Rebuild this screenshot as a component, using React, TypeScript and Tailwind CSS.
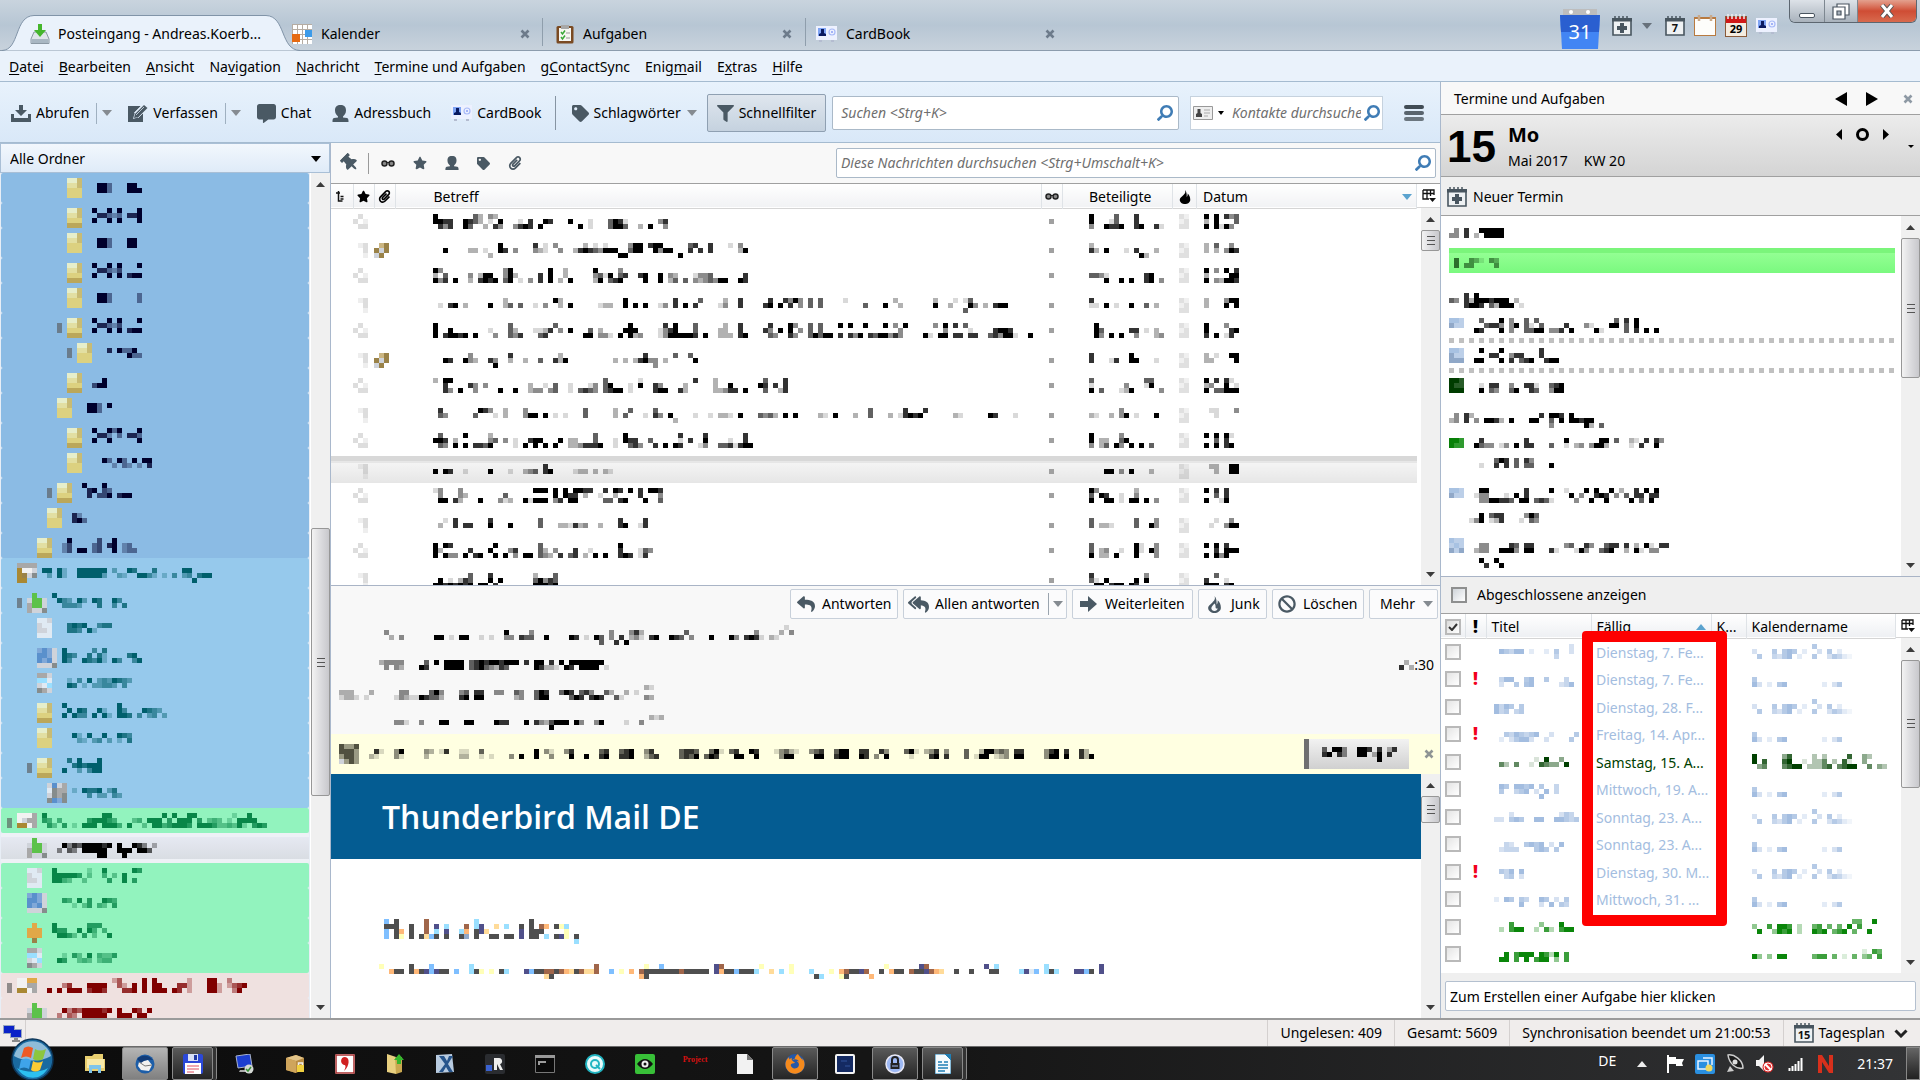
import type { ReactNode } from "react";
import {
  FaBan,
  FaCommentAlt,
  FaFilter,
  FaFirefoxBrowser,
  FaPaperclip,
  FaReply,
  FaReplyAll,
  FaSearch,
  FaStar,
  FaTag,
  FaThumbtack,
} from "react-icons/fa";
import clsx from "clsx";

const CELL = 5;
const INK: Record<string, number> = { "1": 0.15, "2": 0.3, "3": 0.45, "4": 0.62, "5": 0.8, "6": 1 };
const PALETTE: Record<string, string> = {
  a: "#e6eecb", b: "#c8bb74", c: "#e2dfa2", d: "#dcd180", e: "#bba75a",
  f: "#f2f2f2", g: "#a8a8a8", h: "#a98833", i: "#5cc24a", j: "#cfd3da",
  k: "#e0eaf3", l: "#5a90cc", m: "#80a8d8", n: "#e0a848", o: "#9a8248",
  p: "#a8c2e2", q: "#bccfe8", r: "#90a8c8", s: "#4f4f4f", t: "#7fbfff",
  u: "#ffdb99", v: "#9adfff", w: "#a0664a", x: "#50508a", y: "#ffffb8",
  z: "#ffb878", A: "#003c00", B: "#285c28", C: "#088008", D: "#2f9a2f",
  E: "#505040", F: "#9a9a84", G: "#868c8c", H: "#cbb682",
};

// Rows are split by "|", every run is "column:cells"
function Mosaic({ data, color = "#000", className }: { data: string; color?: string; className?: string }) {
  const cells: { x: number; y: number; ch: string }[] = [];
  const rows = data.split("|");
  let width = 1;
  rows.forEach((row, y) => {
    row.split(" ").filter(Boolean).forEach((run) => {
      const [start, chars] = run.split(":");
      chars.split("").forEach((ch, i) => {
        const x = Number(start) + i;
        if (ch !== ".") cells.push({ x, y, ch });
        width = Math.max(width, x + 1);
      });
    });
  });
  return (
    <svg
      width={width * CELL}
      height={rows.length * CELL}
      shapeRendering="crispEdges"
      className={clsx("block shrink-0", className)}
      aria-hidden="true"
    >
      {cells.map((c, i) => (
        <rect
          key={i}
          x={c.x * CELL}
          y={c.y * CELL}
          width={CELL}
          height={CELL}
          fill={PALETTE[c.ch] ?? color}
          opacity={INK[c.ch] ?? 1}
        />
      ))}
    </svg>
  );
}

function Caret({ className = "text-[#858b91]" }: { className?: string }) {
  return (
    <svg width="10" height="6" viewBox="0 0 10 6" className={clsx("shrink-0", className)} aria-hidden="true">
      <path d="M0 0h10L5 6z" fill="currentColor" />
    </svg>
  );
}

function CloseX({ label, className = "text-[#6d7b8b]" }: { label: string; className?: string }) {
  return (
    <button type="button" aria-label={label} className={clsx("shrink-0", className)}>
      <svg width="10" height="10" viewBox="0 0 10 10">
        <path d="M1.5 1.5l7 7M8.500 1.500l-7 7" stroke="currentColor" strokeWidth="2.600" />
      </svg>
    </button>
  );
}

function Scrollbar({ start, size, rest, className }: { start: number; size: number; rest: number; className?: string }) {
  return (
    <div className={clsx("flex w-[19px] shrink-0 flex-col bg-[#f0f0f0]", className)} aria-hidden="true">
      <div className="flex h-[22px] items-center justify-center">
        <svg width="9" height="5"><path d="M0 5h9L4.500 0z" fill="#3c3c3c" /></svg>
      </div>
      <div style={{ flexGrow: start }} />
      <div
        style={{ flexGrow: size }}
        className="flex basis-0 flex-col items-center justify-center gap-[3px] rounded-xs border border-[#979797] bg-linear-to-r from-[#f3f3f3] via-[#dcdcdf] to-[#c8c8cc]"
      >
        <span className="h-px w-2 bg-[#555]" />
        <span className="h-px w-2 bg-[#555]" />
        <span className="h-px w-2 bg-[#555]" />
      </div>
      <div style={{ flexGrow: rest }} />
      <div className="flex h-[22px] items-center justify-center">
        <svg width="9" height="5"><path d="M0 0h9L4.500 5z" fill="#3c3c3c" /></svg>
      </div>
    </div>
  );
}

/* ---------- Icons ---------- */

function InboxIcon() {
  return (
    <svg width="20" height="20" viewBox="0 0 20 20">
      <path d="M4 8h12l3 7v4.500H1V15z" fill="#dfe5ea" stroke="#8b98a3" />
      <path d="M1.500 15h17v4h-17z" fill="#a9b7c2" />
      <path d="M8 0h4v6h4l-6 7-6-7h4z" fill="#44b62c" />
    </svg>
  );
}

function CalendarGridIcon() {
  return (
    <svg width="20" height="20" viewBox="0 0 20 20">
      <path d="M0 0h20v20H0z" fill="#b5aca2" />
      {[0, 5, 10, 15].map((y) => [0, 5, 10, 15].map((x) => <path key={`${x}-${y}`} d={`M${x + 1} ${y + 1}h4v4h-4z`} fill="#fff" />))}
      <path d="M0 10h8v8H0z" fill="#e66a12" />
      <path d="M13 6h7v7h-7z" fill="#3d9be9" />
    </svg>
  );
}

function TasksIcon() {
  return (
    <svg width="18" height="20" viewBox="0 0 18 20">
      <rect x="0.500" y="2" width="17" height="17.500" rx="1.500" fill="#7a4a22" />
      <path d="M3 4h12v13H3z" fill="#f6f6f2" />
      <path d="M5 1h8v4H5z" fill="#a8a8a8" />
      <path d="M5 8l1.500 2L9 6.500M5 13l1.500 2L9 11.500" stroke="#38a838" strokeWidth="1.500" fill="none" />
      <path d="M10 9h4M10 14h4" stroke="#999" />
    </svg>
  );
}

function CardIcon({ className }: { className?: string }) {
  return (
    <svg width="21" height="16" viewBox="0 0 21 16" className={className}>
      <path d="M0 0h21v14H0z" fill="#edf1ff" />
      <path d="M2 2h8v8H2z" fill="#7fa4f4" />
      <path d="M3 10V8l2-1V3h3v4l2 1v2z" fill="#0a1a60" />
      <circle cx="16" cy="6" r="3" fill="none" stroke="#a8baf8" strokeWidth="1.200" />
      <circle cx="16" cy="6" r="1" fill="#8a9ef4" />
      <path d="M3 14h3v2H3zM15 14h3v2h-3z" fill="#b4bcd0" />
    </svg>
  );
}

function DownloadIcon() {
  return (
    <svg width="20" height="17" viewBox="0 0 20 17" fill="#4a5964">
      <path d="M8 0h4v5h4l-6 6-6-6h4z" />
      <path d="M0 9h3v4h14V9h3v8H0z" />
    </svg>
  );
}

function WriteIcon() {
  return (
    <svg width="20" height="18" viewBox="0 0 20 18">
      <path d="M0 2h13l-6 6-2 7 6-2 4-4v9H0z" fill="#4a5964" />
      <path d="M6 14l1-4L16 1l3.500 3-9 9z" fill="#4a5964" />
      <path d="M8 11l8-8M6 9l7-7M10 14l7-7" stroke="#d5e2ee" strokeWidth=".8" />
    </svg>
  );
}

function PersonIcon({ size = 17 }: { size?: number }) {
  return (
    <svg width={size} height={size} viewBox="0 0 17 17" fill="#4a5964">
      <path d="M8.500 0C13 0 14 2.500 14 5.500S12.500 10 11 11.500V12.500l4 .5c1.500.5 1.500 2 1.500 4H.5c0-2 0-3.500 1.500-4l4-.5v-1C4.500 10 3 8.500 3 5.500S4 0 8.500 0z" />
    </svg>
  );
}

function ForwardIcon() {
  return (
    <svg width="17" height="16" viewBox="0 0 17 16">
      <path d="M0 5h8V0l9 8-9 8v-5H0z" fill="#4a5964" />
    </svg>
  );
}

function CalIcon({ text, plus }: { text?: string; plus?: boolean }) {
  return (
    <svg width="20" height="20" viewBox="0 0 20 20" className="shrink-0">
      <path d="M1 3.500h18V19H1z" fill="#eef1f3" stroke="#48555f" strokeWidth="1.600" />
      <path d="M0 2h20v3.500H0z" fill="#48555f" />
      <path d="M3 0v4M7 0v4M11 0v4M15 0v4" stroke="#48555f" strokeWidth="1.500" />
      {plus && <path d="M8 7h4v3h3v4h-3v3H8v-3H5v-4h3z" fill="#48555f" />}
      {text && <text x="10" y="16" fontSize="11" fontWeight="700" textAnchor="middle" fill="#111">{text}</text>}
    </svg>
  );
}

function Glasses() {
  return (
    <svg width="14" height="7" viewBox="0 0 14 7">
      <circle cx="3.500" cy="3.500" r="2.500" fill="#888" stroke="#222" strokeWidth="1.500" />
      <circle cx="10.500" cy="3.500" r="2.500" fill="#888" stroke="#222" strokeWidth="1.500" />
      <path d="M6 2.500h2" stroke="#222" />
    </svg>
  );
}

function Flame({ color = "#000", size = 14, hollow }: { color?: string; size?: number; hollow?: boolean }) {
  return (
    <svg width={size} height={size} viewBox="0 0 14 16">
      <path d="M7 0c1 3 0 4-2 6s-4 3-4 5c0 3 3 5 6 5s6-2 6-5c0-3-1-5-3-7 0 2 0 3-1 4 0-3 0-6-2-8z" fill={color} />
      {hollow && <path d="M7 7c-1 1-3 3-3 4.500S5.500 14 7 14s3-1 3-2.500c-1 .5-2 0-2-1 0-1.500 0-2.500-1-3.500z" fill="#f7f8fa" />}
    </svg>
  );
}

function ColumnPicker() {
  return (
    <svg width="14" height="14" viewBox="0 0 14 14">
      <path d="M1 1h11v5M1 1v9h6M1 4.500h11M5 1v9M8.500 1v6" stroke="#111" strokeWidth="1.300" fill="none" />
      <path d="M7 9h7l-3.500 4z" fill="#111" />
    </svg>
  );
}

function SearchGlyph() {
  return <FaSearch size={16} className="shrink-0 -scale-x-100 text-[#3f7cb5]" aria-hidden="true" />;
}

/* ---------- Title and tabs ---------- */

function TabBar() {
  return (
    <header className="flex h-[51px] shrink-0 items-end justify-between border-b border-[#8c9cad] bg-linear-to-b from-[#c9d4de] via-[#b7c6d4] to-[#c8d2dc]">
      <div className="flex items-end self-stretch pt-4" role="tablist">
        <div role="tab" aria-selected="true" className="relative h-[35px] w-[292px]">
          <svg className="absolute inset-0 h-[36px] w-[304px]" viewBox="0 0 304 36">
            <path d="M2 35.500C20 35 14 1 34 .5H266C286 1 280 35 300 35.500" fill="#eaf2fb" stroke="#8194a8" />
          </svg>
          <div className="relative flex h-full items-center gap-2 pt-[2px] pl-[30px]">
            <InboxIcon />
            <span>Posteingang - Andreas.Koerb...</span>
          </div>
        </div>
        <div role="tab" className="flex h-[35px] w-[250px] items-center gap-[9px] pt-[2px] pr-[12px]">
          <CalendarGridIcon />
          <span className="grow">Kalender</span>
          <CloseX label="Kalender schließen" />
        </div>
        <div className="mb-1 h-7 w-px bg-[#8f9eac]" />
        <div role="tab" className="flex h-[35px] w-[262px] items-center gap-[9px] pt-[2px] pr-[13px] pl-[13px]">
          <TasksIcon />
          <span className="grow">Aufgaben</span>
          <CloseX label="Aufgaben schließen" />
        </div>
        <div className="mb-1 h-7 w-px bg-[#8f9eac]" />
        <div role="tab" className="flex h-[35px] w-[262px] items-center gap-[9px] pt-[2px] pr-[13px] pl-[10px]">
          <CardIcon />
          <span className="grow">CardBook</span>
          <CloseX label="CardBook schließen" />
        </div>
      </div>

      <div className="flex items-start self-stretch pr-[3px]">
        <div className="flex h-full items-center gap-[9px] pt-[2px] pr-[12px]">
          <svg width="40" height="40" viewBox="0 0 40 40" className="mt-[5px]">
            <path d="M3 0h34v8H3z" fill="#bdbdbd" />
            <circle cx="11" cy="3" r="2" fill="#fff" />
            <circle cx="28" cy="3" r="2" fill="#fff" />
            <path d="M0 6h40l-2 34H2z" fill="#4285f4" />
            <path d="M0 6h40l-1 17H1z" fill="#2a5fd0" />
            <text x="20" y="30" fontSize="20" textAnchor="middle" fill="#fff">31</text>
          </svg>
          <div className="flex items-center gap-[10px] pr-[4px] pl-[3px]">
            <CalIcon plus />
            <Caret className="text-[#67717b]" />
          </div>
          <CalIcon text="7" />
          <svg width="22" height="22" viewBox="0 0 22 22">
            <path d="M0 2h22v19H0z" fill="#b87a40" />
            <path d="M1 4h20v16H1z" fill="#fdfdfb" />
            <path d="M5 0v6M17 0v6" stroke="#c9a98a" strokeWidth="2.500" />
          </svg>
          <svg width="22" height="24" viewBox="0 0 22 24" className="shrink-0">
            <path d="M0 2h22v21H0z" fill="#8a5a38" />
            <path d="M1 8h20v14H1z" fill="#f4ece0" />
            <path d="M1 3h20v6H1z" fill="#d01818" />
            <path d="M3 0v5M7 0v5M11 0v5M15 0v5M19 0v5" stroke="#eee" strokeWidth="1.500" />
            <text x="11" y="19" fontSize="11" fontWeight="700" textAnchor="middle">29</text>
          </svg>
          <CardIcon />
        </div>
        <div className="flex h-[23px] overflow-hidden rounded-b-md border border-t-0 border-[#5c6670]">
          <button type="button" aria-label="Minimieren" className="flex w-[35px] items-end justify-center border-r border-[#7d8790] bg-linear-to-b from-[#dde2e8] to-[#a9b2bc] pb-1">
            <span className="h-[5px] w-4 rounded-xs border border-[#4a5560] bg-white" />
          </button>
          <button type="button" aria-label="Verkleinern" className="flex w-[33px] items-center justify-center border-r border-[#7d8790] bg-linear-to-b from-[#dde2e8] to-[#a9b2bc]">
            <svg width="18" height="17" viewBox="0 0 18 17" fill="#fff" stroke="#4a5560" strokeWidth="1.200">
              <path d="M5 1h12v11H5z" />
              <path d="M1 4h12v12H1z" />
              <path d="M5 8h4v4H5z" fill="#a9b2bc" />
            </svg>
          </button>
          <button type="button" aria-label="Schließen" className="flex w-[58px] items-center justify-center bg-linear-to-b from-[#e3a08e] via-[#cf4c34] to-[#d8694d]">
            <svg width="16" height="14" viewBox="0 0 16 14">
              <path d="M3 1l10 12M13 1L3 13" stroke="#555" strokeWidth="5" />
              <path d="M3 1l10 12M13 1L3 13" stroke="#fff" strokeWidth="3" />
            </svg>
          </button>
        </div>
      </div>
    </header>
  );
}

const MENUS: [string, string, string][] = [
  ["", "D", "atei"], ["", "B", "earbeiten"], ["", "A", "nsicht"], ["Na", "v", "igation"],
  ["", "N", "achricht"], ["", "T", "ermine und Aufgaben"], ["g", "C", "ontactSync"],
  ["Enig", "m", "ail"], ["E", "x", "tras"], ["", "H", "ilfe"],
];

function MenuBar() {
  return (
    <nav className="flex h-[31px] shrink-0 items-center gap-[15px] border-b border-[#a5bbd0] bg-[#eaf2fb] pt-[2px] pl-[9px]">
      {MENUS.map(([pre, key, post]) => (
        <button type="button" key={pre + key + post}>
          {pre}<u className="underline-offset-2">{key}</u>{post}
        </button>
      ))}
    </nav>
  );
}

function ToolButton({ icon, children, className }: { icon: ReactNode; children: ReactNode; className?: string }) {
  return (
    <button type="button" className={clsx("flex shrink-0 items-center gap-[5px] text-[#000]", className)}>
      <span className="text-[#4a5964]">{icon}</span>
      {children}
    </button>
  );
}

function Toolbar() {
  return (
    <div className="flex h-[61px] shrink-0 items-center border-b border-[#a5bbd0] bg-linear-to-b from-[#e8f2fc] to-[#d9e8f8] pt-[2px] pl-[11px]">
      <ToolButton icon={<DownloadIcon />}>Abrufen</ToolButton>
      <span className="ml-[7px] h-[21px] w-px bg-[#9fb0c0]" />
      <button type="button" aria-label="Abrufen Optionen" className="ml-[5px]"><Caret /></button>
      <ToolButton icon={<WriteIcon />} className="ml-4">Verfassen</ToolButton>
      <span className="ml-[7px] h-[21px] w-px bg-[#9fb0c0]" />
      <button type="button" aria-label="Verfassen Optionen" className="ml-[5px]"><Caret /></button>
      <ToolButton icon={<FaCommentAlt size={19} />} className="ml-4">Chat</ToolButton>
      <ToolButton icon={<PersonIcon />} className="ml-[21px]">Adressbuch</ToolButton>
      <ToolButton icon={<CardIcon />} className="ml-[20px]">CardBook</ToolButton>
      <span className="ml-[13px] h-[34px] w-px bg-[#8694a2]" />
      <ToolButton icon={<FaTag size={17} />} className="ml-[16px]">Schlagwörter</ToolButton>
      <Caret className="ml-[6px] text-[#858b91]" />
      <ToolButton
        icon={<FaFilter size={17} />}
        className="ml-[10px] h-[38px] rounded-xs border border-[#8fa0b2] bg-linear-to-b from-[#dfe6ee] to-[#c5d2df] px-[9px]"
      >
        Schnellfilter
      </ToolButton>
      <label className="ml-[6px] flex h-[34px] min-w-0 grow items-center rounded-xs border border-[#aab9c8] bg-white pr-[5px] pl-2">
        <input aria-label="Suchen" placeholder="Suchen <Strg+K>" className="min-w-0 grow italic outline-none placeholder:text-[#6f6f6f]" />
        <SearchGlyph />
      </label>
      <label className="ml-[11px] flex h-[34px] w-[193px] shrink-0 items-center gap-[3px] border border-[#c6d2de] bg-white px-[2px]">
        <svg width="20" height="15" viewBox="0 0 20 15" className="shrink-0">
          <path d="M.5.5h19v13H.5z" fill="#eee" stroke="#999" />
          <path d="M3 11V8l1.500-1V3h3v4L9 8v3z" fill="#444" />
          <path d="M11 4h6M11 7h6M11 10h4" stroke="#aaa" />
        </svg>
        <svg width="6" height="4" className="ml-[2px] shrink-0"><path d="M0 0h6L3 4z" /></svg>
        <input aria-label="Kontakte durchsuchen" placeholder="Kontakte durchsuchen" className="ml-[5px] min-w-0 grow italic outline-none placeholder:text-[#6f6f6f]" />
        <SearchGlyph />
      </label>
      <button type="button" aria-label="Menü" className="mr-4 ml-[21px] flex shrink-0 flex-col gap-[2px]">
        <span className="h-1 w-5 rounded-xs bg-[#414c55]" />
        <span className="h-1 w-5 rounded-xs bg-[#59646d]" />
        <span className="h-1 w-5 rounded-xs bg-[#6b767f]" />
      </button>
    </div>
  );
}

/* ---------- Folder tree ---------- */

const ICONS: Record<string, string> = {
  folder: "0:aab|0:ccb|0:ddd|0:ddd",
  dark: "0:aab|0:ccb|0:ddd|0:eee",
  account: "0:gggg|0:hffj|0:hojG|0:hh",
  mailbox: "0:fffg|0:fjgg|0:hhfg",
  server: "0:ffnn|0:ffgg|0:hhfg",
  inbox: "0:.i|0:jiij|0:giij|0:gjjG",
  sheet: "0:kkj|0:jkk|0:jjk|0:kkk",
  sent: "0:mlmj|0:llmj|0:lmlj|0:jjjG",
  feed: "0:jljg|0:kGgg|0:jGgG|0:GlmG",
  trash: "0:ggj|0:vvk|0:jkv|0:Ggj",
  junk: "0:.n|0:nnn|0:nnn|0:.o",
};
const WIDE_ICONS = ["account", "mailbox", "server", "inbox", "sent", "feed"];

interface Folder {
  icon: string;
  indent: number;
  label: string;
  open?: boolean;
  tone?: "blue" | "sky" | "green" | "selected" | "rose";
}

const FOLDERS: Folder[] = [
  { icon: "folder", indent: 13, label: "|1:663 7:66|1:663 7:666" },
  { icon: "dark", indent: 13, label: "0:6 3:6.6 9:6|1:55323.556|0:6 3:6.6 9:6" },
  { icon: "folder", indent: 13, label: "|1:663 7:66|1:663 7:66" },
  { icon: "dark", indent: 13, label: "0:6 3:6.6 9:6|1:55324|0:6 3:6.6 7:566" },
  { icon: "folder", indent: 13, label: "|1:663 9:3|1:663 9:3" },
  { icon: "dark", indent: 13, label: "0:6 3:6.6 9:6|1:55324|0:6 3:6.6 7:566", open: true },
  { icon: "folder", indent: 15, label: "|1:5.6336|5:633", open: true },
  { icon: "dark", indent: 13, label: "|2:6|0:466" },
  { icon: "folder", indent: 11, label: "|1:663.6|1:663" },
  { icon: "dark", indent: 13, label: "0:6 3:636 9:6|1:552.3.553|0:6 3:6 9:6" },
  { icon: "folder", indent: 13, label: "|2:63.63.6.66|4:2.32.2.5" },
  { icon: "dark", indent: 11, label: "0:6 4:6|1:56.43|1:5.446.566", open: true },
  { icon: "folder", indent: 9, label: "|0:52|0:563" },
  { icon: "dark", indent: 7, label: "1:6 7:4 10:6|0:24 6:34.56.23|0:24.66.34..6.233" },
  { icon: "account", indent: 3, tone: "sky", label: "|0:66.62..666666.3..65...5.....66|1:3.62..666663..32..6642.2.4.34.566|30:6" },
  { icon: "inbox", indent: 5, tone: "sky", label: "0:6|1:643.63.65..64|2:4443...5..4.5", open: true },
  { icon: "sheet", indent: 7, tone: "sky", label: "|1:5656..455|1:554.62" },
  { icon: "sent", indent: 7, tone: "sky", label: "0:6 6:4.5|0:654..5.52....56|0:64..65462.64..46" },
  { icon: "trash", indent: 7, tone: "sky", label: "|1:2.4.6.3436543|1:65.2.33443.4" },
  { icon: "dark", indent: 7, tone: "sky", label: "0:6 11:6|1:6.65..62..64...6543|0:6.644.6.62.665.4.34.3" },
  { icon: "folder", indent: 7, tone: "sky", label: "|2:62.6..6..654|3:32.34.3.2.5" },
  { icon: "dark", indent: 7, tone: "sky", label: "1:5.6...6|2:565666|0:6..3.466", open: true },
  { icon: "feed", indent: 9, tone: "sky", label: "|0:2.6556.35|3:4.33.43" },
  { icon: "mailbox", indent: 3, tone: "green", label: "0:6 12:66 24:6.6..66 38:2..6|0:54.4.....566654...34.666.5.666.5.343.2.6666|1:53.5.2.666.6664.6..3.66456665.6665334362.565", open: true },
  { icon: "inbox", indent: 5, tone: "selected", label: "|2:6354666656.6..653.2|1:3.43.66666..666.664|9:66...6" },
  { icon: "sheet", indent: 5, tone: "green", label: "0:6 7:2..6.....65|0:666665.3..4.3.6|0:6643..3....5..6.5" },
  { icon: "sent", indent: 5, tone: "green", label: "|2:54.6.5..654|4:2.35.43.5" },
  { icon: "junk", indent: 5, tone: "green", label: "0:6......555|0:655..6.64.4|1:6653.5.3..6" },
  { icon: "trash", indent: 5, tone: "green", label: "|2:2.53.6.4335|1:65..343.344" },
  { icon: "server", indent: 3, tone: "rose", label: "14:2 15:4 20:6 22:6 29:2 33:66 37:3|4:35 9:6666 15:42 18:6 20:6 22:66 27:55 29:2 33:66 35:2 37:2456|1:6 3:6 5:666 9:56 11:65 16:556 20:6 22:666 26:65 29:2 33:66 35:2 38:3 39:6", open: true },
  { icon: "inbox", indent: 5, tone: "rose", label: "|2:6354666656.6..65.6|1:3.43.66666..666.66" },
];

const TONES = {
  blue: { row: "bg-[#8bbbe4]", ink: "#00002c" },
  sky: { row: "bg-[#96c9ec]", ink: "#005f6c" },
  green: { row: "bg-[#92f3be]", ink: "#088648" },
  selected: { row: "border-y-4 border-[#eef1f6] bg-linear-to-b from-[#e6e9f2] to-[#d9dde3]", ink: "#000" },
  rose: { row: "bg-[#efe1e0]", ink: "#800000" },
};

function FolderPane() {
  return (
    <aside className="flex w-[331px] shrink-0 flex-col border-r border-[#a9b8cc]">
      <label className="flex h-[30px] shrink-0 items-center border border-[#a9bfd6] bg-linear-to-b from-[#f2f7fd] to-[#dfebf8] pt-[2px] pr-2 pl-[9px]">
        <select aria-label="Ordneransicht" className="grow appearance-none outline-none">
          <option>Alle Ordner</option>
        </select>
        <Caret className="text-black" />
      </label>
      <div className="flex min-h-0 grow">
        <ul className="min-w-0 grow overflow-hidden bg-[#e8eef6] pr-px pl-px">
          {FOLDERS.map((f, i) => {
            const tone = TONES[f.tone ?? "blue"];
            return (
              <li
                key={i}
                style={{ paddingLeft: 1 + (f.indent - 2) * CELL }}
                className={clsx(
                  "flex items-start gap-[5px] rounded-xs odd:h-[30px] even:h-[25px]",
                  tone.row,
                  f.tone === "selected" ? "pt-px" : "pt-[5px]",
                )}
              >
                <Mosaic data={f.open ? "|0:4|0:4" : "0:."} color="#555" />
                <Mosaic data={ICONS[f.icon]} />
                <Mosaic data={f.label} color={tone.ink} className={WIDE_ICONS.includes(f.icon) ? "" : "ml-[5px]"} />
              </li>
            );
          })}
        </ul>
        <Scrollbar start={335} size={267} rest={201} className="ml-px" />
      </div>
    </aside>
  );
}

/* ---------- Message list ---------- */

interface Message {
  subject: string;
  from: string;
  date: string;
  clip?: boolean;
  selected?: boolean;
}

const MESSAGES: Message[] = [
  {
    subject: "0:6 8:42 11:32|0:6655..6542.1.6 17:1 19:5 22:65 27:6 31:1 35:4651 45:35|1:535 6:64 10:2.53 16:35 18:65 21:6 29:6 31:1 35:4664 41:2.6 46:3",
    from: "0:6 5:4 9:5|0:6 4:14 9:5|0:3 3:6556 9:56 13:51",
    date: "0:6.6.534|0:2.6...4|0:6.6163",
  },
  {
    subject: "13:6 20:5.1 24:3 30:2.1.1 39:366.5 44:66 51:45 55:5 59:1.3|2:6 7:22.1 13:65.3 20:321 25:3 28:256543666 39:466 44:6366 51:5.5 55:5 61:26|11:2 37:66 49:6",
    from: "0:2|0:52.6 7:1.5 13:2|10:62",
    date: "0:2.4..3|0:2.2.365",
    clip: true,
  },
  {
    subject: "0:63 14:36 23:6 26:2 32:6 37:3|0:2.4 7:3.2 10:66 14:362 21:5.6 26:2 32:3416 37:45 41:56 45:6.32 52:1334 62:5|0:635.6 7:2.5656 14:46.1.3 21:5.6.2.6 32:26.456 42:6 45:6.24 50:4.3234366 61:65",
    from: "|0:4431 11:56|3:6 6:6.6 11:56 14:3",
    date: "0:6.3.6.5|0:2....66|0:6.32665",
  },
  {
    subject: "14:2 24:62 38:6 48:5 53:4 58:2 61:5 67:5..5363.4.4 82:1 92:2 100:2 104:1 106:14|1:1.56.2 11:6 14:24.4 20:1.3 25:2.6 33:122 38:6.6.6 45:13 48:5.6.5 57:13 61:5 66:56.6 71:5.3.4.4 86:4 90:6 93:2 100:6 103:2 107:63 110:2.566|106:4",
    from: "0:5|0:11.6.1 8:6 11:4.2",
    date: "0:2...366|0:2...6.6",
  },
  {
    subject: "0:6 15:4 24:4 39:6 46:5 48:6 52:4 58:2 61:5 67:5 71:63 75:4.4 81:6.6..6 90:6.3.6 100:3.6.5 106:4|0:6 3:6 11:1 15:42 20:1125.3 27:6 31:4.2 38:666 45:1356 52:4 57:22 61:5 66:53.6 71:6.3 75:4.4 93:3 102:3 107:1 112:5665|0:6.56656.6 12:3 15:435 21:45 30:66 33:331.6 39:623 45:1366666 52:5.6 57:222 61:56 67:43 71:53 75:46466 81:5.536.5446 89:66353 98:61.66.55.4 107:35 111:453661 119:6",
    from: "1:6|1:64 8:55.1.2|1:63.6.6..3...23",
    date: "0:6...3|0:6....56|0:5.6.15",
  },
  {
    subject: "7:3 15:5 25:2 42:5 48:4 51:4|2:65..632 11:53 15:2 18:2 21:4 24:526 36:2.2 40:25633 46:2 52:6|12:6 44:3",
    from: "0:5 8:6|0:5 4:15 8:66 13:1",
    date: "0:2.1..66|0:22....6",
    clip: true,
  },
  {
    subject: "0:2.66 34:4 41:1 52:5 56:2 66:4 70:5|2:5 7:53.3 19:2 22:1.4 27:1 31:13 34:46 39:1.6 44:53 50:2 56:2 59:6 65:65.5 70:5|2:53.6 8:3 13:6 16:6 19:233.34 27:1 29:4543 34:4566 39:1 44:566 49:52 56:22355.6 66:4 69:25",
    from: "0:4 11:44|0:1 7:3 11:16|0:6.4 6:126 14:3",
    date: "0:6.5.51|0:23..6.1|0:6.44666",
  },
  {
    subject: "1:5 9:653 14:2 18:3 30:4 36:2 39:4 44:4 87:4 94:5 98:5|1:43 8:4 12:1.2 18:366.6 24:1.1 30:4 36:2.4 42:1.53.6 52:1 55:1.221.6 65:4342.6 72:6 77:21.6 84:2 87:4 91:2.15656 104:21 111:65 116:1|48:2",
    from: "6:3|0:21 4:2.36.1 13:6",
    date: "1:11...3|2:1",
  },
  {
    subject: "1:4 6:6 11:2 32:4 38:6 49:5 54:5 62:5|0:665.2 11:34.3 16:1 19:566 25:6 27:22 32:4 36:1 38:655 43:4 49:1.5 54:6 59:1 62:5|1:43.6.6.5546 16:1 18:6.6.6.6 27:2235556 36:1 39:453 44:5.6.65 53:13 57:4451 61:566",
    from: "0:6 6:3|0:6 2:22 6:46|0:3.24.63.6.6.4",
    date: "0:6.6.61|2:4.5|0:6.6.56",
  },
  {
    subject: "22:5|0:6.65 6:1 11:6 15:1 18:234 22:56 28:122 32:2 34:21",
    from: "|3:66.3.6 12:2",
    date: "1:22..66|2:2..66",
    selected: true,
  },
  {
    subject: "0:13 5:3 20:666 24:6.6.66 30:55 34:5.65.6.5 43:665|1:3 5:32 14:4 24:6.6 27:55 30:2 33:1 36:2 41:5 45:3|1:66 4:52 9:6 13:312 18:61666 24:35.66 34:44 37:56 42:6 45:4",
    from: "0:63 9:2|0:4.65 6:1 9:3|0:6..66.1.66.6.3",
    date: "0:6.5.5|2:4.5|0:6..16",
  },
  {
    subject: "2:1.5 11:5 21:4 37:5 42:5|1:2..5.55 11:6 15:6 21:4 25:221523 33:2 37:56 41:15",
    from: "0:4 9:4 13:3|0:4.221 9:4 12:63",
    date: "2:1..3|1:1..366",
  },
  {
    subject: "0:6.65 12:6 21:4 37:6|0:62 7:5 11:6 15:35 21:42.3 28:5 31:1 37:5 41:143|0:6.633.6.56 12:6 14:6.3 18:66 21:432 25:5.45 30:2.6.6 37:565 41:15",
    from: "0:4 9:61 13:3|0:4.23 6:1 9:61 12:63|0:6 2:22.6 9:6 13:3",
    date: "0:6.6.5|2:5.666|0:6.636",
  },
  {
    subject: "7:4 11:5 20:2 24:4|1:6.1.254 11:6.6 20:46 22:354|0:66565656.66.5 20:66656",
    from: "0:5 11:3|0:41.6 9:6.6|1:66.566.65",
    date: "2:4|0:5...1|0:666.56",
  },
];

const thCell = "border-r border-[#dfe3e7] pt-[2px] text-left font-normal";

function MessageList() {
  return (
    <div className="flex h-[402px] shrink-0 overflow-hidden border-b border-[#a9b4c6] bg-white">
      <div className="min-w-0 grow overflow-hidden">
        <table className="w-full table-fixed border-collapse">
          <colgroup>
            <col className="w-[22px]" />
            <col className="w-[21px]" />
            <col className="w-[21px]" />
            <col />
            <col className="w-[21px]" />
            <col className="w-[110px]" />
            <col className="w-[24px]" />
            <col className="w-[220px]" />
          </colgroup>
          <thead>
            <tr className="h-6 border-b border-[#d5d5d5] bg-linear-to-b from-white to-[#f1f2f4]">
              <th aria-label="Thema" className={thCell}>
                <svg width="9" height="12" className="ml-[5px]"><path d="M0 2h4M2.500 0v4M2.500 4v6h4M4.500 5.500h3M4.500 8h3" stroke="#111" strokeWidth="1.500" fill="none" /></svg>
              </th>
              <th aria-label="Stern" className={thCell}><FaStar size={13} className="ml-[3px]" /></th>
              <th aria-label="Anhang" className={thCell}><FaPaperclip size={13} className="ml-[3px]" /></th>
              <th className={clsx(thCell, "pl-[38px]")}>Betreff</th>
              <th aria-label="Gelesen" className={thCell}><span className="flex justify-center"><Glasses /></span></th>
              <th className={clsx(thCell, "pl-[26px]")}>Beteiligte</th>
              <th aria-label="Junk" className={thCell}><span className="flex justify-center"><Flame /></span></th>
              <th className={clsx(thCell, "pl-[6px]")}>
                <span className="flex items-center justify-between pr-1">Datum<Caret className="text-[#5ba3cf]" /></span>
              </th>
            </tr>
          </thead>
          <tbody>
            {MESSAGES.map((m, i) => (
              <tr
                key={i}
                className={clsx(
                  "align-top odd:h-[30px] even:h-[25px]",
                  m.selected && "border-t-[5px] border-[#d8d8d8] bg-linear-to-b from-[#f4f4f4] to-[#e6e6e6]",
                )}
              >
                <td />
                <td className={m.selected ? "pt-[3px]" : "pt-[5px]"}>
                  <Mosaic data={i % 2 ? "1:12|2:2|2:1" : "1:2|0:2.1|1:22"} color="#8d8d8d" />
                </td>
                <td className={m.selected ? "pt-[3px]" : "pt-[5px]"}>{m.clip && <Mosaic data="1:Ho|0:ojo|0:jo" />}</td>
                <td className={clsx("overflow-hidden pl-[38px]", m.selected ? "pt-[3px]" : "pt-[5px]")}><Mosaic data={m.subject} /></td>
                <td className={clsx("pl-[7px]", m.selected ? "pt-[3px]" : "pt-[5px]")}><Mosaic data="|0:6" color="#a0a0a0" /></td>
                <td className={clsx("overflow-hidden pl-[26px]", m.selected ? "pt-[3px]" : "pt-[5px]")}><Mosaic data={m.from} /></td>
                <td className={clsx("pl-[6px]", m.selected ? "pt-[3px]" : "pt-[5px]")}><Mosaic data="0:21|0:12|0:22" color="#999" /></td>
                <td className={clsx("pl-[7px]", m.selected ? "pt-[3px]" : "pt-[5px]")}><Mosaic data={m.date} /></td>
              </tr>
            ))}
          </tbody>
        </table>
      </div>
      <div className="flex w-[23px] shrink-0 flex-col items-end">
        <button type="button" aria-label="Spalten wählen" className="flex h-6 w-full shrink-0 items-center justify-center border-b border-[#d5d5d5]"><ColumnPicker /></button>
        <Scrollbar start={0} size={19} rest={312} className="grow" />
      </div>
    </div>
  );
}

/* ---------- Message pane ---------- */

const actionButton = "flex h-[30px] items-center rounded-xs border border-[#c8d0da] bg-[#fbfbfc] text-black";

function MessagePane() {
  return (
    <article className="flex min-h-0 grow flex-col bg-[#f8f8f8]">
      <div className="flex justify-end gap-[5px] pt-[3px] pr-[2px]">
        <button type="button" className={clsx(actionButton, "w-[108px] gap-[7px] pl-[6px]")}><FaReply size={18} className="text-[#4a5964]" />Antworten</button>
        <div className={clsx(actionButton, "w-[164px]")}>
          <button type="button" className="flex grow items-center gap-[6px] pl-1"><FaReplyAll size={21} className="text-[#4a5964]" />Allen antworten</button>
          <button type="button" aria-label="Weitere Antwortarten" className="flex h-[22px] w-[18px] items-center justify-center border-l border-[#9aa4ae]"><Caret /></button>
        </div>
        <button type="button" className={clsx(actionButton, "w-[121px] gap-[8px] pl-[7px]")}><ForwardIcon />Weiterleiten</button>
        <button type="button" className={clsx(actionButton, "w-[69px] gap-[8px] pl-[7px]")}><Flame size={17} color="#4a5964" hollow />Junk</button>
        <button type="button" className={clsx(actionButton, "w-[92px] gap-[7px] pl-[5px]")}><FaBan size={18} className="text-[#4a5964]" />Löschen</button>
        <button type="button" className={clsx(actionButton, "w-[69px] justify-between pr-[4px] pl-[10px]")}>Mehr<Caret /></button>
      </div>
      <div className="flex h-[115px] shrink-0 flex-col gap-[10px] overflow-hidden pt-[6px] pl-2">
        <Mosaic data="89:1|9:3 33:6 38:3 54:3 58:352 69:4 83:3 88:2.3|10:2.3 19:66.1.66..1.1..33.544 41:6 46:65.1.64.3.5.231.56..654.3...6...63.5651.21|52:4..5.6" />
        <div className="flex h-5 items-start">
          <Mosaic data="|8:23333 17:4.6 21:6666.4565665666.5 39:66.5.6..6 46:66646 49:6666|9:3.32 16:65.. 21:6666.45643254.. 39:65221.65.66 49:666.1" />
          <span className="mr-[6px] ml-auto flex items-start"><Mosaic data="|1:2|0:5.2" />:30</span>
        </div>
        <Mosaic data="61:21|0:222 6:2 12:33 18:463 24:34.55..33..43..465..465.453..42..2.1|0:1221.1 11:13211 16:6544 20:2 24:56.66 35:23 39:466 46:465.565 55:41 61:32|" />
        <Mosaic data="62:212|11:331 16:3 20:66 25:66 31:655 37:6.5323 42:3666.63 51:36 57:1 60:3|42:6" />
      </div>
      <div className="flex h-10 shrink-0 items-center bg-[#ffffe1] pr-[6px] pl-2">
        <Mosaic data="0:EFFE|0:EEEF|0:FEEF|0:jFEF" />
        <Mosaic
          className="ml-[10px]"
          data="1:51 5:36 11:32 14:15 18:11 22:4 33:6 35:31 39:35 46:45 50:456 55:35 62:4554 68:461 72:45 76:65 81:13421 88:345 93:466 98:55 102:53 107:461 111:235 115:3 119:4 122:266 125:343 129:55 135:356 139:5 142:52|0:21 5:31 11:2 18:22 22:1.1 28:3.6 33:6 36:3 40:6 43:6 46:56 50:556 55:245 62:4546 67:465 73:66 77:6 82:366 89:66 93:566 98:65 101:3.4 103:6 108:1 112:56 115:5 119:4 121:166 125:123 129:66 135:366 139:6 142:526"
        />
        <button type="button" aria-label="Einstellungen" className="ml-auto flex h-[30px] w-[105px] items-center justify-center border-l-[5px] border-[#6f6f70] bg-linear-to-b from-[#f2f2f2] to-[#d0d0d0]">
          <Mosaic data="0:4.663..665.5.25|0:56.53..66.26.5|11:6" />
        </button>
        <span className="ml-[15px] flex"><CloseX label="Hinweis schließen" className="text-[#8e9494]" /></span>
      </div>
      <div className="flex min-h-0 grow bg-white">
        <div className="min-w-0 grow overflow-hidden">
          <h1 className="flex h-[85px] items-center bg-[#045c92] pl-[51px] font-['Open_Sans','Noto_Sans',sans-serif] text-[32px] font-semibold text-white">
            Thunderbird Mail DE
          </h1>
          <Mosaic
            className="mt-[60px] ml-[53px]"
            data="0:t.s 8:w 18:v 29:s|0:sss..s..w.x.v 16:w.vx..u.v..s.s.wz.syv|0:t.sz.s..w.v.x..vz.sxu 27:x.sss....y|0:t.sy.s.suts.s..sr.s..ss.ss.x.ss.v.sxy 38:s|38:v"
          />
          <Mosaic
            className="mt-[20px] ml-12"
            data="0:y 6:s 10:t 18:v 43:w 53:y 56:t 67:xw 76:y 82:y 101:y 108:xw 121:x.v 133:v 144:x|2:zss.szsxtxss.t..vsy.y.sv 29:xtsswwswzuswuuw 46:t.y.z.wssssssswsssss 67:xzsstsssv 78:u.v.y 86:v 90:y.zwssxw 100:s.zss 106:wssxwzu 115:s..s...ss 128:vxkt 133:vsv 139:xxts.x|33:us 52:zs 87:sv 92:ys 98:z"
          />
        </div>
        <Scrollbar start={0} size={26} rest={179} />
      </div>
    </article>
  );
}

function FilterBar() {
  return (
    <div className="flex h-[41px] shrink-0 items-center border-b border-[#a0a0a0] bg-[#f8f8f8] pr-1 pl-[10px] text-[#4a5964]">
      <button type="button" aria-label="Anheften"><FaThumbtack size={18} className="-rotate-45" /></button>
      <span className="mr-3 ml-[9px] h-[21px] w-px bg-[#9a9a9a]" />
      <div className="flex items-center gap-[18px]">
        <button type="button" aria-label="Ungelesen"><Glasses /></button>
        <button type="button" aria-label="Stern"><FaStar size={14} /></button>
        <button type="button" aria-label="Kontakt"><PersonIcon size={14} /></button>
        <button type="button" aria-label="Schlagwort"><FaTag size={13} /></button>
        <button type="button" aria-label="Anhang"><FaPaperclip size={14} /></button>
      </div>
      <label className="ml-auto flex h-[30px] w-[600px] items-center rounded-xs border border-[#aab9c8] bg-white px-1">
        <input aria-label="Diese Nachrichten durchsuchen" placeholder="Diese Nachrichten durchsuchen <Strg+Umschalt+K>" className="min-w-0 grow italic outline-none placeholder:text-[#6f6f6f]" />
        <SearchGlyph />
      </label>
    </div>
  );
}

/* ---------- Today pane ---------- */

function DottedRule() {
  return <div className="h-[5px] bg-[repeating-linear-gradient(90deg,#c0c0c0_0_5px,transparent_5px_10px)]" />;
}

function Agenda() {
  return (
    <div className="flex h-[361px] shrink-0 overflow-hidden border-b border-[#a9b4c6] bg-white">
      <div className="min-w-0 grow overflow-hidden pt-3 pr-[6px] pl-2">
        <Mosaic data="1:3.5..66666|0:33.5.2.6666" />
        <div className="mt-[10px] h-[25px] border-t-[5px] border-[#7bf57b] bg-linear-to-b from-[#93ff93] to-[#7af97f] pt-[5px] pl-[5px]">
          <Mosaic data="0:5..431.43|0:5.44....4" color="#154c15" />
        </div>
        <Mosaic className="mt-5" data="3:5.6|0:43.526665666.2|3:5665.42666.1" />
        <div className="mt-[10px] flex h-5 gap-[10px]">
          <Mosaic data="0:ppq|0:rqq" />
          <Mosaic data="1:4...6.3..4.4 28:4.5.6|2:4553.36.41.4....5...31...66.4.6|0:65...6.3..4466.335.6....61....4.5.6.6" />
        </div>
        <DottedRule />
        <div className="mt-[5px] flex h-5 gap-[10px]">
          <Mosaic data="0:ppq|0:rqq|0:rrr" />
          <Mosaic data="1:6...6 13:5|3:55..355...5|0:66...6.5.456..566" />
        </div>
        <DottedRule />
        <div className="mt-[5px] flex gap-[10px]">
          <Mosaic data="0:AAB|0:ABB|0:AAA" />
          <Mosaic data="|1:1.55..3..551..456|1:6.43..46..54..366" />
        </div>
        <Mosaic className="mt-5" data="1:3.52 18:5.665.6|0:23.5.3.6652.6...66..4.6.66566|20:3 27:62.4" />
        <div className="mt-[10px] flex h-10 gap-[10px]">
          <Mosaic data="0:CCD|0:CDD" />
          <Mosaic data="1:5........5.......6......66.4..21.5.53|0:6433.13.6.55...4..1.23.3662....1.5..6||  |4:465.4.53|1:1..5.5.4.44...6" />
        </div>
        <div className="mt-[10px] flex h-[45px]">
          <Mosaic data="0:ppq|0:rqq" />
          <div>
            <Mosaic className="ml-[10px]" data="1:66.......5....6..1...6.6..6.2..5.6.6|0:133...1.6.5........6.3..565.3.4.55.55|1:3366554.66.4541....3..6..6....6.4.6" />
            <Mosaic className="mt-[10px] ml-[5px]" data="2:6.455....364|0:136.125...1.43" />
          </div>
        </div>
        <div className="mt-[5px] flex gap-[10px]">
          <Mosaic data="0:pqq|0:qpq|0:rqr" />
          <Mosaic data="|1:33....54.55......34..53..455.5.2.61.55|0:233..6663.66...51...163..456..2.61.33||1:6..6|2:5..6" />
        </div>
      </div>
      <Scrollbar start={0} size={140} rest={178} />
    </div>
  );
}

const CAL_A = "12:5|0:3...5.565.2..3.5.2|1:5..4356.2..5..35421";
const CAL_B = "|0:5|0:63.2.56.......2.35";

interface Task {
  title: string;
  due?: string;
  cal: string;
  urgent?: boolean;
  color?: string;
  tone?: string;
}

const TASKS: Task[] = [
  { title: "15:3|1:65466.2.. 10:2.5 15:3|12:4", due: "Dienstag, 7. Fe...", cal: CAL_A },
  { title: "|1:466..56..5...4|1:3..5.56 6:3 13:346", due: "Dienstag, 7. Fe...", cal: CAL_B, urgent: true },
  { title: "|0:6465.5|0:645.45", due: "Dienstag, 28. F...", cal: CAL_A },
  { title: "|2:5465456..3....5|1:2.35663..3....5", due: "Freitag, 14. Apr...", cal: CAL_B, urgent: true },
  {
    title: "8:1.6..3|1:42.4..1.5433.6", due: "Samstag, 15. A...", color: "#004000", tone: "text-[#004000]",
    cal: "0:6.....35....2.2....5..32|0:6.5...56..1.224.2.51..3|1:34...4566.22245.4566..4.32",
  },
  { title: "|1:65.6656.5..4|1:5..456.3.6.4|9:6", due: "Mittwoch, 19. A...", cal: CAL_B },
  { title: "3:3.........354|0:33.565..66..66545", due: "Sonntag, 23. A...", cal: CAL_A },
  { title: "|2:43..5656.3.6|1:3444...565.5", due: "Sonntag, 23. A...", cal: CAL_B },
  { title: "|1:546.6|2:45.3", due: "Dienstag, 30. M...", cal: CAL_A, urgent: true },
  { title: "|0:2.65.54..65.3.5|5:6...3.6.54", due: "Mittwoch, 31. ...", cal: CAL_B },
  { title: "3:5.....3...6|1:2.566..2.52.566", color: "#0a860a", cal: "20:44..6|0:3..5.665.2..45.4.4.6.5|1:6..3656.2..656.456.4..6" },
  { title: "|2:6.5666.6526.5|1:66.5.6.566.3.5", color: "#0a860a", cal: "22:1.54|0:63.3.66.....455.4.1.4.34.5" },
];

function TaskList() {
  return (
    <div className="relative flex min-h-0 grow overflow-hidden bg-white">
      <div className="min-w-0 grow overflow-hidden">
        <table className="w-full table-fixed border-collapse">
          <colgroup>
            <col className="w-[24px]" />
            <col className="w-[21px]" />
            <col className="w-[105px]" />
            <col className="w-[120px]" />
            <col className="w-[35px]" />
            <col />
          </colgroup>
          <thead>
            <tr className="h-6 border-b border-[#d5d5d5] bg-linear-to-b from-white to-[#eef0f3]">
              <th className={thCell}>
                <span className="relative ml-1 block size-4">
                  <input type="checkbox" defaultChecked aria-label="Alle Aufgaben" className="block size-4 appearance-none border-2 border-[#b9b9b9] bg-linear-to-br from-[#dcdcdc] to-white" />
                  <svg width="10" height="8" className="pointer-events-none absolute top-1 left-[3px]"><path d="M1 4l3 3 5-6" stroke="#333" strokeWidth="2" fill="none" /></svg>
                </span>
              </th>
              <th aria-label="Priorität" className={thCell}><span className="block text-center text-[17px] leading-4 font-black">!</span></th>
              <th className={clsx(thCell, "pl-[5px]")}>Titel</th>
              <th className={clsx(thCell, "pl-[5px]")}>
                <span className="flex items-center justify-between pr-[5px]">Fällig<Caret className="rotate-180 text-[#5ba3cf]" /></span>
              </th>
              <th className={clsx(thCell, "pl-[5px]")}>K...</th>
              <th className={clsx(thCell, "pl-[5px]")}>Kalendername</th>
            </tr>
          </thead>
          <tbody>
            {TASKS.map((t, i) => (
              <tr key={i} className="odd:h-[27px] even:h-[28px]">
                <td><input type="checkbox" aria-label={`Aufgabe ${i + 1} erledigt`} className="ml-1 block size-4 appearance-none border-2 border-[#b9b9b9] bg-linear-to-br from-[#e4e4e4] to-white" /></td>
                <td className="text-center text-[17px] leading-4 font-black text-[#f2001c]">{t.urgent && "!"}</td>
                <td className="overflow-hidden pl-[8px]"><Mosaic data={t.title} color={t.color ?? "#a3bde0"} /></td>
                <td className={clsx("pt-[2px] pl-[5px] leading-5 whitespace-nowrap", t.tone ?? "text-[#a3bde0]")}>{t.due}</td>
                <td />
                <td className="overflow-hidden pl-[6px]"><Mosaic data={t.cal} color={t.color ?? "#a3bde0"} /></td>
              </tr>
            ))}
          </tbody>
        </table>
      </div>
      <div className="flex w-6 shrink-0 flex-col items-end">
        <button type="button" aria-label="Spalten wählen" className="flex h-6 w-full shrink-0 items-center justify-center border-b border-[#d5d5d5]"><ColumnPicker /></button>
        <Scrollbar start={0} size={128} rest={166} className="grow" />
      </div>
      {/* Marker around the due dates */}
      <div className="pointer-events-none absolute top-[17px] left-[141px] h-[295px] w-[145px] rounded-sm border-[11px] border-[#fe0000]" />
    </div>
  );
}

function TodayPane() {
  return (
    <aside className="flex w-[480px] shrink-0 flex-col border-l border-[#a9b8cc] bg-[#efefef]">
      <div className="flex h-[33px] shrink-0 items-center border-b border-[#a0a0a0] bg-[#f8f8f8] pt-[2px] pr-[7px] pl-[13px]">
        <h2 className="grow">Termine und Aufgaben</h2>
        <button type="button" aria-label="Zurück"><svg width="12" height="14"><path d="M12 0v14L0 7z" /></svg></button>
        <button type="button" aria-label="Vor" className="mr-[25px] ml-[19px]"><svg width="12" height="14"><path d="M0 0v14l12-7z" /></svg></button>
        <CloseX label="Bereich schließen" className="flex text-[#8e99a4]" />
      </div>
      <div className="flex h-[62px] shrink-0 items-center border-b border-[#a0a0a0] bg-linear-to-b from-[#ececec] to-[#d4d4d4] pt-[2px] pr-[6px] pl-[6px]">
        <span className="font-['Liberation_Sans',Arial,sans-serif] text-[44px] leading-none font-bold">15</span>
        <div className="ml-3 grow">
          <div className="text-[20px] leading-7 font-bold">Mo</div>
          <div className="flex gap-4 leading-6"><span>Mai 2017</span><span>KW 20</span></div>
        </div>
        <div className="flex items-center gap-[14px] self-start pt-[11px]">
          <button type="button" aria-label="Voriger Tag"><svg width="6" height="11"><path d="M6 0v11L0 5.500z" /></svg></button>
          <button type="button" aria-label="Heute" className="size-[13px] rounded-full border-[3px] border-black" />
          <button type="button" aria-label="Nächster Tag"><svg width="6" height="11"><path d="M0 0v11l6-5.500z" /></svg></button>
        </div>
        <svg width="6" height="3" className="ml-[19px]"><path d="M0 0h6L3 3z" /></svg>
      </div>
      <div className="flex h-[39px] shrink-0 items-center border-b border-[#a0a0a0] pt-[2px] pl-[6px]">
        <button type="button" className="flex items-center gap-[6px]"><CalIcon plus />Neuer Termin</button>
      </div>
      <Agenda />
      <div className="flex h-[37px] shrink-0 items-center border-b border-[#a0a0a0] pl-[10px]">
        <label className="flex items-center gap-[10px]">
          <input type="checkbox" className="size-4 appearance-none border-2 border-[#8e8f8f] bg-linear-to-br from-[#cfd4da] to-white" />
          Abgeschlossene anzeigen
        </label>
      </div>
      <TaskList />
      <div className="shrink-0 px-1 pt-2 pb-[7px]">
        <input
          aria-label="Neue Aufgabe"
          placeholder="Zum Erstellen einer Aufgabe hier klicken"
          className="block h-[30px] w-full rounded-xs border border-[#b4c0cf] bg-white px-1 outline-none placeholder:text-black"
        />
      </div>
    </aside>
  );
}

/* ---------- Status bar and taskbar ---------- */

function StatusBar() {
  return (
    <footer className="flex h-7 shrink-0 items-stretch border-t-2 border-[#9a9a9a] bg-[#f0edec]">
      <div className="flex w-[26px] items-center border-r border-[#d4d0cf] pl-[3px]">
        <svg width="19" height="18" viewBox="0 0 19 18">
          <path d="M0 1h12v9H0zM7 5h12v9H7z" fill="#9aa8c0" />
          <path d="M1 2h10v7H1zM8 6h10v7H8z" fill="#0a22c8" />
          <path d="M11 14h4v2h2v2H9v-2h2z" fill="#8a8a8a" />
        </svg>
      </div>
      <div className="ml-auto flex items-center border-l border-[#d4d0cf] px-3">Ungelesen: 409</div>
      <div className="flex items-center border-l border-[#d4d0cf] px-3">Gesamt: 5609</div>
      <div className="flex items-center border-l border-[#d4d0cf] px-3">Synchronisation beendet um 21:00:53</div>
      <button type="button" className="flex items-center gap-[5px] border-l border-[#d4d0cf] pr-[12px] pl-[10px]">
        <CalIcon text="15" />
        Tagesplan
        <svg width="14" height="9" className="ml-1"><path d="M1.500 1.500L7 7l5.500-5.500" stroke="#222" strokeWidth="3" fill="none" /></svg>
      </button>
    </footer>
  );
}

function Box({ fill, children }: { fill: string; children?: ReactNode }) {
  return (
    <svg width="20" height="20" viewBox="0 0 20 20">
      <rect width="20" height="20" rx="2" fill={fill} />
      {children}
    </svg>
  );
}

const APPS: { name: string; open?: boolean; stacked?: boolean; active?: boolean; icon: ReactNode }[] = [
  { name: "Explorer", icon: <svg width="20" height="19" viewBox="0 0 20 19"><path d="M0 2h7l2-2h9v5h2v12H0z" fill="#e9cf70" /><path d="M2 5h17v9H2z" fill="#f8e9a8" /><path d="M4 11h12v8h-3v-4H7v4H4z" fill="#7fc4ea" /></svg> },
  { name: "Thunderbird", open: true, active: true, icon: <svg width="20" height="20" viewBox="0 0 20 20"><circle cx="10" cy="10" r="9.500" fill="#1d5ea8" /><path d="M4 8l9-2 4 5-3 6-8-1-3-4z" fill="#f1f1f1" /><path d="M4 8l6 4 7-1" stroke="#777" fill="none" /><path d="M2 5c5-5 12-4 16 1-5-1-9 0-12 3z" fill="#123c78" /></svg> },
  { name: "Commander", open: true, stacked: true, icon: <Box fill="#2b48d8"><path d="M5 0h10v7H5z" fill="#d8dff5" /><path d="M11 1h3v5h-3z" fill="#2038a0" /><path d="M2 9h16v11H2z" fill="#fff" /><path d="M4 12h12M4 15h12M4 18h7" stroke="#e05060" /></Box> },
  { name: "Remote", icon: <svg width="20" height="20" viewBox="0 0 20 20"><path d="M1 2l14-2 2 12-14 2z" fill="#1c3fd0" stroke="#a9b4cc" /><path d="M5 16h8l1 2H4z" fill="#aaa" /><circle cx="14" cy="15" r="4.500" fill="#d5d9d5" /><path d="M11 15l2 2 3-4" stroke="#389038" strokeWidth="1.500" fill="none" /></svg> },
  { name: "Archiv", icon: <svg width="20" height="19" viewBox="0 0 20 19"><path d="M1 4l10-3 8 3v11l-8 4-10-3z" fill="#b98c42" /><path d="M1 4l10-3 8 3-8 3z" fill="#e2c488" /><path d="M1 4l10 3v12L1 16z" fill="#cfa55c" /><path d="M12 11h7v7h-7z" fill="#f0d040" /><path d="M13.500 11V9h4v2" stroke="#eee" strokeWidth="1.500" fill="none" /></svg> },
  { name: "Notiz", icon: <Box fill="#fff"><path d="M1 1h18v18H1z" fill="none" stroke="#a83030" strokeWidth="1.500" /><path d="M10 3c5 0 5 9-1 14 2-4 2-6 0-6-4-1-4-8 1-8z" fill="#d02020" /></Box> },
  { name: "Sync", icon: <svg width="18" height="20" viewBox="0 0 18 20"><path d="M1 0l9 3v17l-9-2z" fill="#e8d080" /><path d="M9 3h7v15l-6 2z" fill="#c9a850" /><path d="M11 10V6H8l5-6 5 6h-3v4z" fill="#35b52c" /></svg> },
  { name: "Bild", icon: <svg width="18" height="19" viewBox="0 0 18 19"><path d="M0 1l16-1 2 18-18 1z" fill="#b8cbe0" /><path d="M3 2l6 8-6 8h4l3-5 3 5h4l-5-8 5-8h-4l-2 5-3-5z" fill="#27558c" /></svg> },
  { name: "Registry", icon: <Box fill="#2a2c30"><path d="M1 11h6v6H1z" fill="#3a62d0" /><path d="M9 16V4h5c4 0 4 6 1 6l3 6h-3l-3-6v6z" fill="#eee" /></Box> },
  { name: "Konsole", icon: <svg width="20" height="18" viewBox="0 0 20 18"><path d="M.5.5h19v17H.5z" fill="#0a0a0a" stroke="#777" /><path d="M0 0h20v3H0z" fill="#999" /><path d="M3 7h8M3 9h2" stroke="#ccc" strokeWidth="1.500" /></svg> },
  { name: "Quiterian", icon: <svg width="20" height="20" viewBox="0 0 20 20"><circle cx="10" cy="10" r="9" fill="#e8fbfc" stroke="#22b5c2" strokeWidth="2" /><circle cx="10" cy="10" r="4" fill="none" stroke="#22b5c2" strokeWidth="2" /><path d="M11 11l4 4" stroke="#22b5c2" strokeWidth="2" /></svg> },
  { name: "Viewer", icon: <Box fill="#38c038"><path d="M2 10q8-10 16 0-8 10-16 0z" fill="#111" /><circle cx="10" cy="10" r="3.500" fill="#eee" /><circle cx="10" cy="10" r="1.500" fill="#111" /></Box> },
  { name: "Projekt", icon: <span className="pb-2 font-['Liberation_Serif',serif] text-[8px] leading-3 font-bold text-[#d81010]">Project</span> },
  { name: "Dokument", icon: <svg width="16" height="20" viewBox="0 0 16 20"><path d="M0 0h10l6 6v14H0z" fill="#f2f2f2" /><path d="M10 0l6 6h-6z" fill="#777" /></svg> },
  { name: "Firefox", open: true, icon: <span className="flex size-5 items-center justify-center rounded-full bg-[#2558a8] text-[#f58a1c]"><FaFirefoxBrowser size={20} /></span> },
  { name: "Editor", icon: <Box fill="#f4f4f4"><path d="M2 2h16v16H2z" fill="#142a62" /><path d="M6 7h6M10 12h5" stroke="#31529a" /></Box> },
  { name: "KeePass", open: true, icon: <svg width="20" height="20" viewBox="0 0 20 20"><circle cx="10" cy="10" r="9" fill="#9db8f4" stroke="#e8e8f4" strokeWidth="1.500" /><path d="M5.500 9h9v6h-9z" fill="#222" /><path d="M7 9V6a3 3 0 016 0v3" stroke="#222" strokeWidth="2" fill="none" /><path d="M7 12h6" stroke="#9db8f4" /></svg> },
  { name: "Writer", open: true, stacked: true, icon: <svg width="16" height="20" viewBox="0 0 16 20"><path d="M0 0h10l6 6v14H0z" fill="#f4fafd" stroke="#1f7fb5" /><path d="M10 0h6v6z" fill="#1f7fb5" /><path d="M3 8h4M3 11h10M3 14h10M3 17h7M9 8h4" stroke="#1f7fb5" strokeWidth="1.500" /></svg> },
];

function Taskbar() {
  return (
    <footer className="flex h-[34px] shrink-0 items-center border-t border-[#6b6b6b] bg-linear-to-r from-[#0c0c0c] via-[#161616] to-[#333436] text-white">
      <div className="relative h-full w-[72px] shrink-0">
        <button type="button" aria-label="Start" className="absolute -top-[9px] left-[11px]">
          <svg width="43" height="43" viewBox="0 0 43 43">
            <circle cx="21.500" cy="21.500" r="20.500" fill="#1a6aa0" stroke="#0c3558" strokeWidth="1.500" />
            <path d="M3 18a19 19 0 0137 0c-10 6-27 6-37 0z" fill="#8fbcd8" />
            <path d="M6 30c8 13 24 13 31 0-8 5-23 5-31 0z" fill="#2cc0f0" />
            <path d="M13 10q4-3 9 0l-2 10q-5-3-10 0z" fill="#ee5a24" />
            <path d="M24 11q5 3 11 0l-3 10q-5 3-10 0z" fill="#8cc63e" />
            <path d="M10 22q5-3 10 0l-2 9q-5-3-10 0z" fill="#3fa4ea" />
            <path d="M22 23q5 3 10 0l-3 9q-5 3-9 0z" fill="#fccb35" />
          </svg>
        </button>
      </div>
      <div className="flex h-full">
        {APPS.map((app) => (
          <div key={app.name} className="flex h-full w-[50px]">
            <button
              type="button"
              aria-label={app.name}
              className={clsx(
                "flex h-full items-center justify-center overflow-hidden rounded-xs",
                app.stacked ? "w-[41px]" : "w-[46px]",
                app.open && "border border-[#8a8a8a]",
                app.active ? "bg-linear-to-b from-[#b5b5b5] to-[#808080]" : app.open && "bg-linear-to-b from-[#5a5a5a] to-[#252525]",
              )}
            >
              {app.icon}
            </button>
            {app.stacked && <span className="h-full w-[4px] rounded-r-xs border-r border-[#8a8a8a] bg-[#333]" />}
          </div>
        ))}
      </div>
      <div className="ml-auto flex h-full items-center">
        <span className="pb-[5px]">DE</span>
        <svg width="10" height="6" className="ml-[21px]"><path d="M0 6h10L5 0z" fill="#eee" /></svg>
        <svg width="18" height="18" viewBox="0 0 18 18" className="ml-5"><path d="M1 0v18" stroke="#fff" strokeWidth="2" /><path d="M2 2h7v2h8l-2 4 1 3H9V9H2z" fill="#fff" /></svg>
        <span className="ml-[10px] flex"><Box fill="#2a8fe0"><path d="M3 7h10v8H3z" fill="none" stroke="#e8f4ff" strokeWidth="1.500" /><path d="M8 4h9v7" stroke="#e8f4ff" strokeWidth="1.500" fill="none" /><circle cx="14" cy="14" r="3.500" fill="#f0d860" /></Box></span>
        <svg width="19" height="19" viewBox="0 0 19 19" className="ml-[11px]"><path d="M2 1c6-1 15 5 15 13-7 2-14-5-15-13z" fill="#1c1c1c" stroke="#ccc" strokeWidth="1.500" /><circle cx="9" cy="8" r="2.500" fill="#ddd" /><path d="M1 18l3-6 4 5z" fill="#ccc" /></svg>
        <svg width="19" height="19" viewBox="0 0 19 19" className="ml-[10px]"><path d="M1 6h3l5-5v16l-5-5H1z" fill="#f4f4f4" /><circle cx="13" cy="13" r="5.500" fill="#e03030" /><path d="M10 10l6 6" stroke="#fff" strokeWidth="2" /><circle cx="13" cy="13" r="4" fill="none" stroke="#fff" /></svg>
        <svg width="16" height="14" className="ml-[14px]"><path d="M1.500 14v-3M4.500 14V9M7.500 14V7M10.500 14V4M13.500 14V1" stroke="#fff" strokeWidth="2" /></svg>
        <svg width="15" height="18" viewBox="0 0 15 18" className="ml-[14px]"><path d="M0 18V0h4l7 11V0h4v18h-4L4 7v11z" fill="#d8301c" /></svg>
        <span className="ml-6">21:37</span>
        <button type="button" aria-label="Desktop anzeigen" className="ml-[13px] h-full w-[14px] border border-[#888] bg-linear-to-b from-[#666] to-[#222]" />
      </div>
    </footer>
  );
}

export default function App() {
  return (
    <div className="flex h-screen min-h-[900px] flex-col overflow-hidden bg-white font-['Noto_Sans','Open_Sans',sans-serif] text-[14px] leading-5 text-black">
      <TabBar />
      <MenuBar />
      <div className="flex min-h-0 grow">
        <div className="flex min-w-0 grow flex-col">
          <Toolbar />
          <div className="flex min-h-0 grow">
            <FolderPane />
            <main className="flex min-w-0 grow flex-col">
              <FilterBar />
              <MessageList />
              <MessagePane />
            </main>
          </div>
        </div>
        <TodayPane />
      </div>
      <StatusBar />
      <Taskbar />
    </div>
  );
}
